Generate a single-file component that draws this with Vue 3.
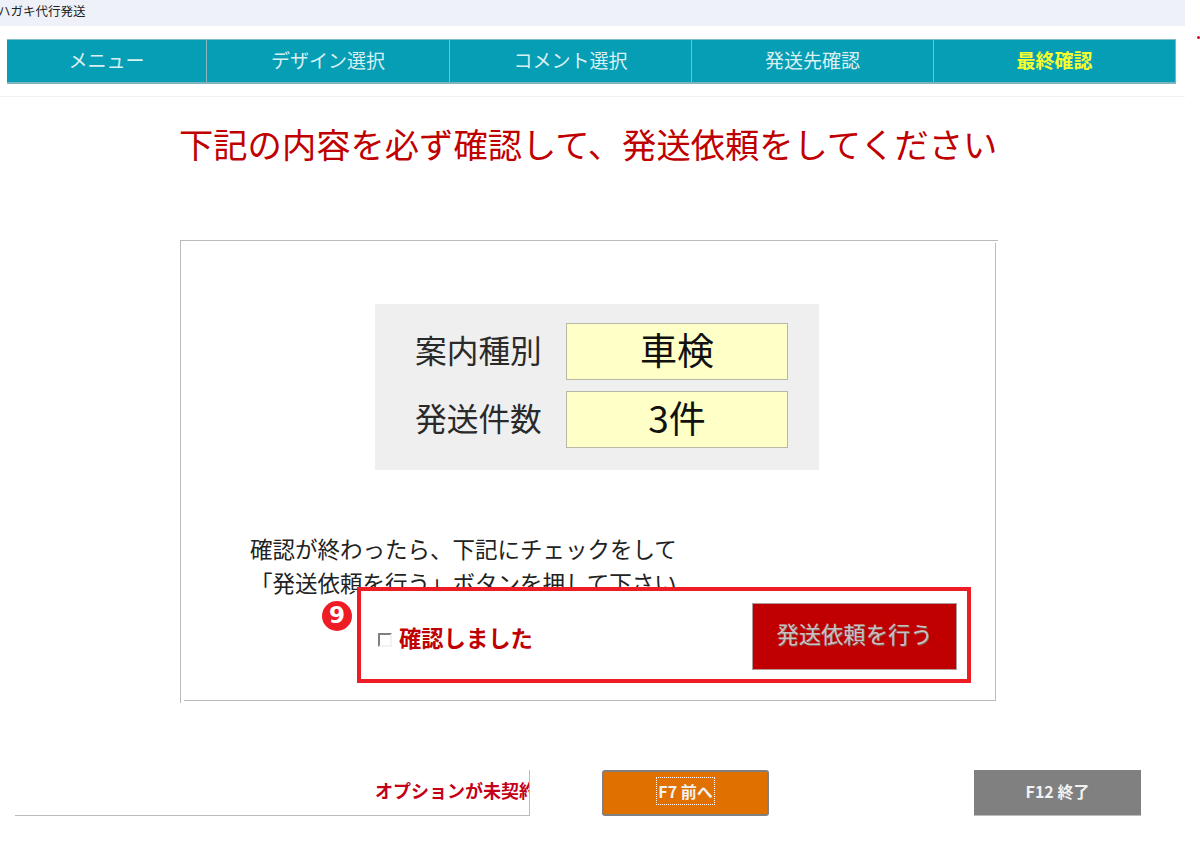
<script setup>
const navItems = [
  { label: 'メニュー', active: false },
  { label: 'デザイン選択', active: false },
  { label: 'コメント選択', active: false },
  { label: '発送先確認', active: false },
  { label: '最終確認', active: true },
]
const summary = [
  { label: '案内種別', value: '車検' },
  { label: '発送件数', value: '3件' },
]
</script>

<template>
  <div class="page">
    <header class="titlebar"><span class="app-name">ハガキ代行発送</span></header>
    <span class="tick"></span>

    <nav class="nav">
      <div v-for="item in navItems" :key="item.label" class="nav-item" :class="{ active: item.active }">
        {{ item.label }}
      </div>
    </nav>
    <div class="divider"></div>

    <h1 class="title">下記の内容を必ず確認して、発送依頼をしてください</h1>

    <section class="card">
      <div class="panel">
        <template v-for="row in summary" :key="row.label">
          <div class="label">{{ row.label }}</div>
          <div class="value">{{ row.value }}</div>
        </template>
      </div>

      <p class="note">確認が終わったら、下記にチェックをして<br />「発送依頼を行う」ボタンを押して下さい</p>

      <span class="badge">9</span>
      <div class="highlight">
        <label class="confirm">
          <input class="check" type="checkbox" />
          <span>確認しました</span>
        </label>
        <button class="send" type="button">発送依頼を行う</button>
      </div>
    </section>

    <footer class="footer">
      <div class="option"><span>オプションが未契約です</span></div>
      <button class="fkey prev" type="button"><span class="focus">F7 前へ</span></button>
      <button class="fkey end" type="button">F12 終了</button>
    </footer>
  </div>
</template>

<style scoped>
.page {
  position: relative;
  width: 1200px;
  height: 850px;
  overflow: hidden;
  background: #fff;
  font-family: "Noto Sans CJK JP", "Noto Sans", sans-serif;
  color: #222;
}
.titlebar {
  width: 1185px;
  height: 26px;
  background: #eef2f8;
  font-size: 12.5px;
  line-height: 21px;
  color: #222;
}
.app-name {
  display: block;
  margin-left: -2px;
}
.tick {
  position: absolute;
  left: 1197px;
  top: 36px;
  width: 3px;
  height: 3px;
  border-radius: 50%;
  background: #c8102e;
}
.nav {
  display: grid;
  grid-template-columns: 200px 243px 242px 242px 242px;
  width: 1169px;
  height: 45px;
  margin: 13px 0 0 7px;
  box-sizing: border-box;
  background: #059eb5;
  border-top: 1px solid #7fbcc6;
  border-bottom: 2px solid #7fb3bd;
}
.nav-item {
  box-sizing: border-box;
  border-right: 1px solid #8fb4bb;
  text-align: center;
  font-size: 19px;
  line-height: 40px;
  font-weight: 400;
  color: #d9f0f3;
}
.nav-item:last-child {
  border-right: 1px solid #7fb3bd;
}
.nav-item.active {
  color: #f6ff2e;
  font-weight: 700;
}
.divider {
  width: 1185px;
  height: 1px;
  margin-top: 12px;
  background: #f1f1f1;
}
.title {
  margin: 22px 0 73px 179px;
  font-size: 34.3px;
  line-height: 48px;
  font-weight: 400;
  white-space: nowrap;
  color: #c00000;
}
.card {
  position: relative;
  box-sizing: border-box;
  width: 819px;
  height: 464px;
  margin-left: 180px;
  padding: 64px 0 0 195px;
  background:
    linear-gradient(#bbb, #bbb) 0 0 / 818px 1px no-repeat,
    linear-gradient(#bbb, #bbb) 0 0 / 1px 463px no-repeat,
    linear-gradient(#bbb, #bbb) 815px 3px / 1px 458px no-repeat,
    linear-gradient(#bbb, #bbb) 4px 460px / 812px 1px no-repeat;
}
.panel {
  display: grid;
  grid-template-columns: 151px 222px;
  grid-auto-rows: 57px;
  row-gap: 11px;
  box-sizing: border-box;
  width: 444px;
  height: 166px;
  padding: 19px 0 0 40px;
  background: #efefef;
}
.label {
  font-size: 31.7px;
  line-height: 53px;
  white-space: nowrap;
  color: #2a2a2a;
}
.value {
  box-sizing: border-box;
  height: 57px;
  border: 1px solid #b8b8a8;
  background: #ffffc8;
  text-align: center;
  font-size: 37px;
  line-height: 51px;
  color: #111;
}
.note {
  margin: 61px 0 0 -125px;
  font-size: 22.5px;
  line-height: 34px;
  white-space: nowrap;
  color: #222;
}
.badge {
  position: absolute;
  left: 142px;
  top: 361px;
  width: 30px;
  height: 30px;
  border-radius: 50%;
  background: #ee1c25;
  color: #fff;
  font-family: "DejaVu Sans", sans-serif;
  font-size: 23px;
  font-weight: 700;
  line-height: 29px;
  text-align: center;
}
.highlight {
  position: absolute;
  left: 177px;
  top: 347px;
  box-sizing: border-box;
  width: 614px;
  height: 96px;
  padding: 12px 10px 0 17px;
  display: flex;
  justify-content: space-between;
  align-items: flex-start;
  border: 4px solid #ee1c25;
  background: #fff;
}
.confirm {
  display: flex;
  align-items: center;
  gap: 7px;
  margin-top: 16px;
  font-size: 22.3px;
  line-height: 36px;
  font-weight: 700;
  color: #c00000;
}
.check {
  appearance: none;
  box-sizing: border-box;
  width: 14px;
  height: 14px;
  margin: 6px 0 0;
  background: #fff;
  border: 2px solid #f2f2f2;
  border-top-color: #808080;
  border-left-color: #808080;
}
.send {
  box-sizing: border-box;
  width: 205px;
  height: 67px;
  padding: 0 0 7px;
  border: 1px solid #b09a9a;
  background: #c00000;
  color: #c9c0c0;
  font-family: inherit;
  font-size: 22.3px;
  text-shadow: 1px 1px 0 #8c5a5a;
}
.footer {
  display: flex;
  margin: 66px 0 0 15px;
}
.option {
  box-sizing: border-box;
  width: 515px;
  height: 46px;
  padding: 5px 0 0 360px;
  overflow: hidden;
  border-right: 1px solid #bbb;
  border-bottom: 1px solid #bbb;
  font-size: 18px;
  line-height: 30px;
  font-weight: 700;
  white-space: nowrap;
  color: #c40018;
}
.fkey {
  box-sizing: border-box;
  width: 167px;
  height: 46px;
  padding: 0 0 4px;
  font-family: inherit;
  font-size: 16px;
  font-weight: 700;
  color: #f2f2f2;
}
.prev {
  margin-left: 72px;
  background: #e07000;
  border: 2px solid #808080;
  border-radius: 3px;
}
.focus {
  display: inline-block;
  padding: 2px 1px;
  line-height: 22px;
  outline: 1px dotted #fff;
}
.end {
  margin-left: 205px;
  background: #808080;
  border: none;
  border-bottom: 1px solid #bbb;
}
</style>

<style>
html,
body {
  margin: 0;
  background: #fff;
}
</style>
